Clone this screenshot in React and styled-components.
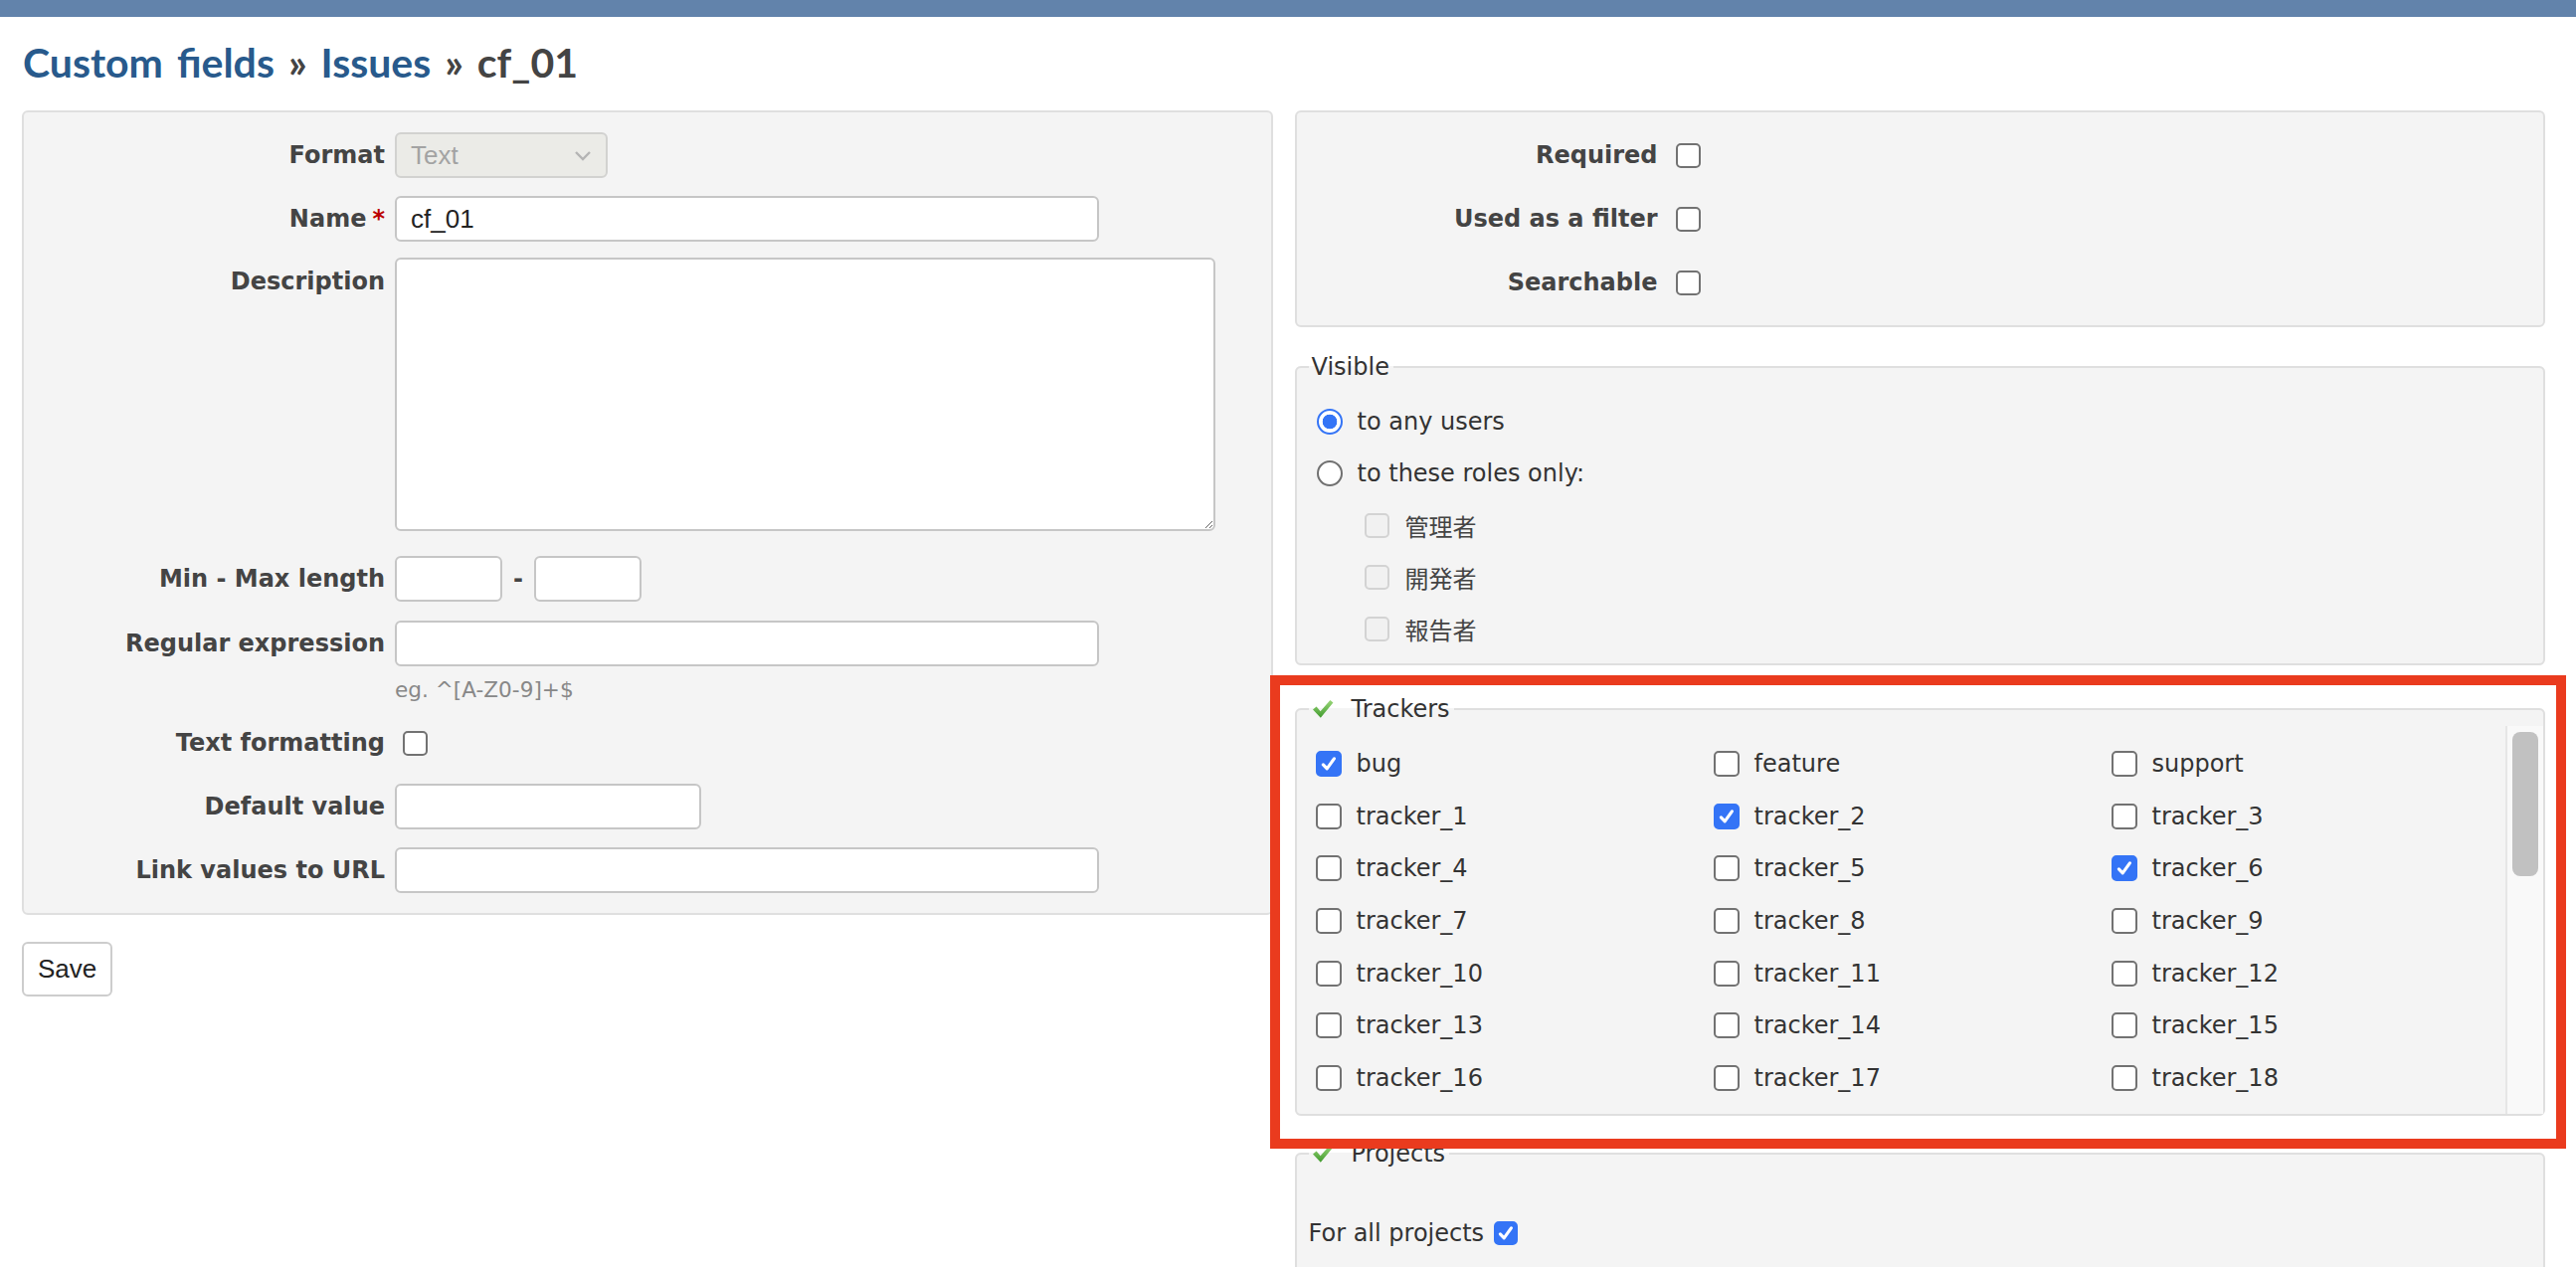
import React from "react";
import styled, { createGlobalStyle } from "styled-components";

const GlobalStyle = createGlobalStyle`
  html, body {
    margin: 0;
    padding: 0;
    background: #fff;
    overflow: hidden;
  }
  body {
    font-family: "DejaVu Sans", Verdana, sans-serif;
    font-size: 24px;
    color: #333;
  }
`;

const TopBar = styled.div`
  height: 17px;
  background: #6283ab;
`;

const Content = styled.div`
  padding: 0 31px 0 22px;
`;

const Title = styled.h2`
  margin: 22px 0 24px 1px;
  font-family: Lato, "DejaVu Sans", sans-serif;
  font-weight: 700;
  font-size: 41px;
  line-height: 48px;
  word-spacing: 4px;
  color: #444;
`;

const Crumb = styled.a`
  color: #285a8c;
  text-decoration: none;
`;

const Columns = styled.div`
  display: grid;
  grid-template-columns: 1fr 1fr;
  column-gap: 22px;
  align-items: start;
`;

const Column = styled.div`
  display: flex;
  flex-direction: column;
  min-width: 0;
`;

const Panel = styled.div`
  background: #f4f4f4;
  border: 2px solid #dfdfdf;
  border-radius: 6px;
  padding: 11px 13px;
`;

const Row = styled.div`
  display: flex;
  align-items: ${(props) => (props.$top ? "flex-start" : "center")};
  padding: ${(props) => props.$pad || "9px 0"};
`;

const Label = styled.label`
  flex: 0 0 350px;
  margin-right: 10px;
  margin-top: ${(props) => props.$offset || "0"};
  text-align: right;
  font-weight: bold;
  line-height: 28px;
  color: #444;
`;

const Req = styled.span`
  color: #bb0000;
  margin-left: 6px;
`;

const Field = styled.div`
  display: flex;
  flex-direction: ${(props) => (props.$column ? "column" : "row")};
  align-items: ${(props) => (props.$column ? "flex-start" : "center")};
  min-height: 46px;
`;

const TextInput = styled.input`
  box-sizing: border-box;
  height: 46px;
  width: ${(props) => props.$w}px;
  border: 2px solid #c6c6c6;
  border-radius: 6px;
  background: #fff;
  font-family: "Liberation Sans", Arial, sans-serif;
  font-size: 26px;
  color: #222;
  padding: 0 14px;
  outline: none;
`;

const TextArea = styled.textarea`
  box-sizing: border-box;
  width: 825px;
  height: 275px;
  border: 2px solid #c6c6c6;
  border-radius: 6px;
  background: #fff;
  font-family: "Liberation Sans", Arial, sans-serif;
  font-size: 26px;
  resize: vertical;
  outline: none;
  display: block;
`;

const Select = styled.div`
  box-sizing: border-box;
  width: 214px;
  height: 46px;
  border: 2px solid #d2d2d0;
  border-radius: 6px;
  background: #ebebe7;
  display: flex;
  align-items: center;
  justify-content: space-between;
  padding: 0 14px;
  font-family: "Liberation Sans", Arial, sans-serif;
  font-size: 26px;
  color: #a3a3a3;
`;

const Dash = styled.span`
  margin: 0 11px;
  font-weight: bold;
  color: #444;
`;

const Hint = styled.em`
  display: block;
  font-style: normal;
  font-size: 21.6px;
  color: #888;
  margin-top: 11px;
`;

const SaveButton = styled.button`
  align-self: flex-start;
  margin-top: 27px;
  height: 55px;
  padding: 0 14px;
  border: 2px solid #cdcdcd;
  border-radius: 6px;
  background: #fff;
  font-family: "Liberation Sans", Arial, sans-serif;
  font-size: 26px;
  color: #222;
`;

const BoxMark = styled.span`
  box-sizing: border-box;
  flex: none;
  display: inline-flex;
  align-items: center;
  justify-content: center;
  width: ${(props) => props.$size || 26}px;
  height: ${(props) => props.$size || 26}px;
  border-radius: 5px;
  margin: 0 ${(props) => props.$mr || 0}px 0 ${(props) => props.$ml || 0}px;
  border: 2px solid
    ${(props) =>
      props.$checked ? "#3474f6" : props.$disabled ? "#d3d3d3" : "#727272"};
  background: ${(props) =>
    props.$checked ? "#3474f6" : props.$disabled ? "#f1f1f1" : "#fff"};
`;

const RadioMark = styled.span`
  box-sizing: border-box;
  flex: none;
  width: 26px;
  height: 26px;
  border-radius: 50%;
  margin: 0 15px 0 8px;
  border: 2px solid ${(props) => (props.$checked ? "#3474f6" : "#707070")};
  background: ${(props) =>
    props.$checked
      ? "radial-gradient(circle, #3474f6 0 7px, #fff 7.6px)"
      : "#fff"};
`;

const Fieldset = styled.fieldset`
  margin: ${(props) => props.$mt || 0}px 0 0;
  padding: ${(props) => props.$pad || "15px 12px 9px"};
  border: 2px solid #dfdfdf;
  border-radius: 6px;
  background: #f4f4f4;
  min-width: 0;
`;

const Legend = styled.legend`
  display: flex;
  align-items: center;
  padding: 0 4px 0 3px;
  font-size: 24px;
  line-height: 28px;
  color: #333;
`;

const LegendIcon = styled.svg`
  width: 22px;
  height: 20px;
  margin-right: 18px;
`;

const OptionRow = styled.div`
  display: flex;
  align-items: center;
  height: 52px;
  padding-left: ${(props) => props.$indent || 0}px;
  color: ${(props) => (props.$muted ? "#444" : "#333")};
`;

const RoleName = styled.span`
  font-family: "Noto Sans CJK JP", "DejaVu Sans", sans-serif;
`;

const Highlight = styled.div`
  position: relative;
  margin-top: 30px;
`;

const RedFrame = styled.div`
  position: absolute;
  top: -20px;
  left: -25px;
  right: -21px;
  bottom: -33px;
  border: 10px solid #ea3b1e;
  pointer-events: none;
  z-index: 2;
`;

const ScrollArea = styled.div`
  display: flex;
  height: 390px;
`;

const ScrollList = styled.div`
  flex: 1;
  min-width: 0;
  overflow: hidden;
  padding-top: 12px;
`;

const ScrollTrack = styled.div`
  flex: 0 0 26px;
  border-left: 2px solid #e6e6e6;
  background: #f9f9f9;
  padding: 6px 5px 0;
  box-sizing: content-box;
  width: 16px;
`;

const ScrollThumb = styled.div`
  height: 145px;
  border-radius: 8px;
  background: #c1c1c1;
`;

const TrackerGrid = styled.div`
  display: grid;
  grid-template-columns: repeat(3, 400px);
  grid-auto-rows: 52.6px;
  align-items: center;
`;

const TrackerItem = styled.label`
  display: flex;
  align-items: center;
  color: #333;
`;

const ProjectRow = styled.div`
  display: flex;
  align-items: center;
  height: 46px;
  color: #333;
`;

const Chevron = () => (
  <svg width="18" height="11" viewBox="0 0 18 11">
    <path d="M2 2 L9 9 L16 2" fill="none" stroke="#b4b4b4" strokeWidth="2.4" />
  </svg>
);

const Tick = () => (
  <svg width="18" height="18" viewBox="0 0 16 16">
    <path
      d="M3 8.8 L6.4 12.4 L12.8 3.4"
      fill="none"
      stroke="#fff"
      strokeWidth="2.8"
      strokeLinecap="round"
      strokeLinejoin="round"
    />
  </svg>
);

const Checkbox = ({ checked, disabled, size, ml = 0, mr = 0 }) => (
  <BoxMark
    $checked={checked}
    $disabled={disabled}
    $size={size}
    $ml={ml}
    $mr={mr}
  >
    {checked && <Tick />}
  </BoxMark>
);

const GreenCheck = ({ id }) => (
  <LegendIcon viewBox="0 0 22 20">
    <defs>
      <linearGradient id={id} x1="0" y1="0" x2="0" y2="1">
        <stop offset="0" stopColor="#9bd77a" />
        <stop offset="1" stopColor="#3f9a2c" />
      </linearGradient>
    </defs>
    <path
      d="M1 10.5 L4.6 7.6 L8.6 12.2 L18.4 1 L21.4 3.6 L8.8 18.8 Z"
      fill={`url(#${id})`}
    />
  </LegendIcon>
);

const trackers = [
  "bug",
  "feature",
  "support",
  ...Array.from({ length: 51 }, (_, i) => `tracker_${i + 1}`),
];
const checkedTrackers = ["bug", "tracker_2", "tracker_6"];
const roles = ["管理者", "開発者", "報告者"];

function App() {
  return (
    <>
      <GlobalStyle />
      <TopBar />
      <Content>
        <Title>
          <Crumb href="#">Custom fields</Crumb> » <Crumb href="#">Issues</Crumb> »
          cf_01
        </Title>
        <Columns>
          <Column>
            <Panel>
              <Row>
                <Label>Format</Label>
                <Select>
                  <span>Text</span>
                  <Chevron />
                </Select>
              </Row>
              <Row>
                <Label>
                  Name<Req>*</Req>
                </Label>
                <TextInput $w={708} defaultValue="cf_01" />
              </Row>
              <Row $top $pad="7px 0 16px">
                <Label $offset="10px">Description</Label>
                <TextArea />
              </Row>
              <Row>
                <Label>Min - Max length</Label>
                <Field>
                  <TextInput $w={108} />
                  <Dash>-</Dash>
                  <TextInput $w={108} />
                </Field>
              </Row>
              <Row $top $pad="10px 0 5px">
                <Label $offset="9px">Regular expression</Label>
                <Field $column>
                  <TextInput $w={708} />
                  <Hint>eg. ^[A-Z0-9]+$</Hint>
                </Field>
              </Row>
              <Row $pad="13px 0 9px">
                <Label>Text formatting</Label>
                <Field>
                  <Checkbox ml={8} size={25} />
                </Field>
              </Row>
              <Row>
                <Label>Default value</Label>
                <TextInput $w={308} />
              </Row>
              <Row>
                <Label>Link values to URL</Label>
                <TextInput $w={708} />
              </Row>
            </Panel>
            <SaveButton>Save</SaveButton>
          </Column>

          <Column>
            <Panel>
              {["Required", "Used as a filter", "Searchable"].map((name) => (
                <Row key={name}>
                  <Label>{name}</Label>
                  <Field>
                    <Checkbox ml={8} size={25} />
                  </Field>
                </Row>
              ))}
            </Panel>

            <Fieldset $mt={26}>
              <Legend>Visible</Legend>
              <OptionRow>
                <RadioMark $checked />
                to any users
              </OptionRow>
              <OptionRow>
                <RadioMark />
                to these roles only:
              </OptionRow>
              {roles.map((role) => (
                <OptionRow key={role} $indent={56} $muted>
                  <Checkbox disabled size={25} mr={16} />
                  <RoleName>{role}</RoleName>
                </OptionRow>
              ))}
            </Fieldset>

            <Highlight>
              <RedFrame />
              <Fieldset $pad="3px 0 0 12px">
                <Legend>
                  <GreenCheck id="gc-trackers" />
                  Trackers
                </Legend>
                <ScrollArea>
                  <ScrollList>
                    <TrackerGrid>
                      {trackers.map((t) => (
                        <TrackerItem key={t}>
                          <Checkbox
                            checked={checkedTrackers.includes(t)}
                            ml={7}
                            mr={15}
                          />
                          {t}
                        </TrackerItem>
                      ))}
                    </TrackerGrid>
                  </ScrollList>
                  <ScrollTrack>
                    <ScrollThumb />
                  </ScrollTrack>
                </ScrollArea>
              </Fieldset>
            </Highlight>

            <Fieldset $mt={24} $pad="43px 12px 60px">
              <Legend>
                <GreenCheck id="gc-projects" />
                Projects
              </Legend>
              <ProjectRow>
                For all projects
                <Checkbox checked size={24} ml={10} />
              </ProjectRow>
            </Fieldset>
          </Column>
        </Columns>
      </Content>
    </>
  );
}

export default App;
